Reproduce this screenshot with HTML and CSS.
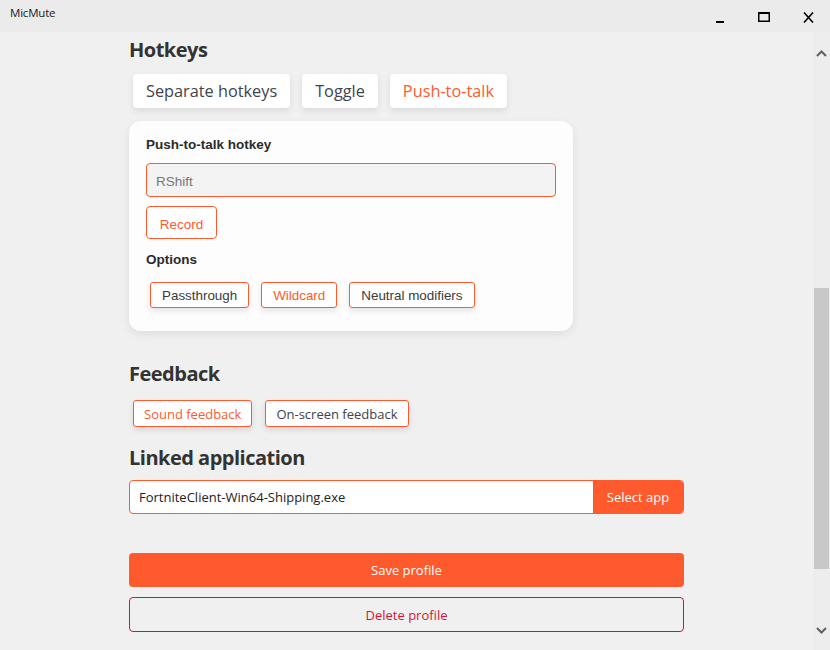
FILE: index.html
```html
<!DOCTYPE html>
<html>
<head>
<meta charset="utf-8">
<title>MicMute</title>
<link rel="stylesheet" href="styles.css">
</head>
<body>
<div class="window">
  <header class="titlebar">
    <span class="title">MicMute</span>
    <div class="controls">
      <span class="ctl"><svg width="8" height="2" viewBox="0 0 8 2"><rect width="8" height="2" fill="#000"/></svg></span>
      <span class="ctl"><svg width="12" height="10" viewBox="0 0 12 10"><rect x="0.75" y="1" width="10.5" height="8.25" fill="none" stroke="#000" stroke-width="1.5"/><rect x="0" y="0" width="12" height="2" fill="#000"/></svg></span>
      <span class="ctl"><svg width="11" height="11" viewBox="0 0 11 11"><path d="M1 0.5 L10 10.5 M10 0.5 L1 10.5" stroke="#000" stroke-width="1.6" fill="none"/></svg></span>
    </div>
  </header>
  <div class="body">
    <main class="content">
      <h2 class="heading">Hotkeys</h2>
      <div class="tabs">
        <button class="tab">Separate hotkeys</button>
        <button class="tab">Toggle</button>
        <button class="tab active">Push-to-talk</button>
      </div>
      <section class="card">
        <h3 class="card-title">Push-to-talk hotkey</h3>
        <div class="hotkey-input">RShift</div>
        <button class="record">Record</button>
        <h3 class="card-title options-title">Options</h3>
        <div class="options">
          <button class="opt">Passthrough</button>
          <button class="opt on">Wildcard</button>
          <button class="opt">Neutral modifiers</button>
        </div>
      </section>
      <h2 class="heading feedback-heading">Feedback</h2>
      <div class="feedback">
        <button class="fb on">Sound feedback</button>
        <button class="fb">On-screen feedback</button>
      </div>
      <h2 class="heading linked-heading">Linked application</h2>
      <div class="app-group">
        <div class="app-input">FortniteClient-Win64-Shipping.exe</div>
        <button class="select-app">Select app</button>
      </div>
      <button class="save">Save profile</button>
      <button class="delete">Delete profile</button>
    </main>
    <aside class="scrollbar">
      <span class="arrow"><svg width="11" height="7" viewBox="0 0 11 7"><path d="M1 6 L5.5 1.5 L10 6" stroke="#606060" stroke-width="2" fill="none"/></svg></span>
      <div class="track"><div class="thumb"></div></div>
      <span class="arrow"><svg width="11" height="7" viewBox="0 0 11 7"><path d="M1 1 L5.5 5.5 L10 1" stroke="#606060" stroke-width="2" fill="none"/></svg></span>
    </aside>
  </div>
</div>
</body>
</html>
```
FILE: styles.css
```css
* { box-sizing: border-box; }
html, body { margin: 0; padding: 0; }
body {
  width: 830px;
  height: 650px;
  overflow: hidden;
  background: #f0f0f0;
  font-family: "Open Sans", "Noto Sans", sans-serif;
  color: #333;
}
button { font: inherit; cursor: pointer; }

.window { display: flex; flex-direction: column; height: 650px; }

.titlebar {
  height: 32px;
  background: #ebebeb;
  display: flex;
  align-items: flex-start;
  justify-content: space-between;
  flex-shrink: 0;
}
.title {
  font-size: 11.5px;
  color: #1a1a1a;
  margin: 5px 0 0 10px;
  letter-spacing: -0.2px;
}
.controls { display: flex; padding-top: 12px; padding-right: 0; }
.ctl { width: 44px; display: flex; justify-content: center; align-items: flex-start; height: 11px; }
.ctl:first-child { align-items: flex-end; }

.body { display: flex; flex: 1; min-height: 0; }

.content {
  flex: 1;
  padding: 3px 0 0 129px;
  display: flex;
  flex-direction: column;
  align-items: flex-start;
}

.heading {
  margin: 0;
  padding-top: 1px;
  font-size: 20px;
  line-height: 28px;
  font-weight: 700;
  color: #333;
  letter-spacing: -0.5px;
}

.tabs { display: flex; gap: 12px; margin: 10px 0 0 4px; }
.tab {
  height: 34px;
  padding: 0 13px;
  border: none;
  border-radius: 4px;
  background: #fff;
  color: #40444c;
  font-size: 16.3px;
  box-shadow: 0 3px 7px rgba(0,0,0,0.09);
}
.tab.active { color: #ff5a2e; }

.card {
  width: 444px;
  margin-top: 13px;
  background: #fdfdfd;
  border-radius: 12px;
  padding: 16px 17px 23px;
  box-shadow: 0 3px 10px rgba(0,0,0,0.08);
  font-family: "Liberation Sans", Arial, sans-serif;
  display: flex;
  flex-direction: column;
  align-items: flex-start;
}
.card-title {
  margin: 0;
  font-size: 13.5px;
  line-height: 16px;
  font-weight: 700;
  color: #2b2b2b;
}
.hotkey-input {
  width: 410px;
  height: 34px;
  margin-top: 10px;
  border: 1px solid #ff5a2e;
  border-radius: 4px;
  background: #f3f3f3;
  color: #777;
  font-size: 13.5px;
  line-height: 32px;
  padding: 2px 0 0 9px;
}
.record {
  margin-top: 9px;
  height: 33px;
  width: 71px;
  padding: 3px 0 0;
  border: 1px solid #ff5a2e;
  border-radius: 4px;
  background: #fff;
  color: #ff5a2e;
  font-size: 13.5px;
}
.options-title { margin-top: 13px; }
.options { display: flex; gap: 12px; margin: 14px 0 0 4px; }
.opt {
  height: 26px;
  padding: 0 11px;
  border: 1px solid #ff5a2e;
  border-radius: 3px;
  background: #fff;
  color: #3a3a3a;
  font-size: 13.4px;
  box-shadow: 0 3px 6px rgba(0,0,0,0.1);
}
.opt.on { color: #ff5a2e; }

.feedback-heading { margin-top: 28px; }
.feedback { display: flex; gap: 13px; margin: 12px 0 0 4px; }
.fb {
  height: 27px;
  padding: 0 10px;
  border: 1px solid #ff5a2e;
  border-radius: 3px;
  background: #fff;
  color: #3d4149;
  font-size: 13px;
  box-shadow: 0 3px 6px rgba(0,0,0,0.1);
}
.fb.on { color: #ff5a2e; }

.linked-heading { margin-top: 16px; }
.app-group {
  width: 555px;
  height: 34px;
  margin-top: 8px;
  display: flex;
  border: 1px solid #ff5a2e;
  border-radius: 4px;
  overflow: hidden;
  background: #fff;
}
.app-input {
  flex: 1;
  padding-left: 9px;
  font-size: 13px;
  line-height: 32px;
  color: #222;
}
.select-app {
  width: 90px;
  border: none;
  padding: 0;
  background: #ff5a2e;
  color: #fff;
  font-size: 13px;
}

.save {
  width: 555px;
  height: 34px;
  margin-top: 39px;
  border: none;
  border-radius: 4px;
  background: #ff5a2e;
  color: #fff;
  font-size: 13px;
}
.delete {
  width: 555px;
  height: 35px;
  margin-top: 10px;
  border: 1px solid #d9122f;
  border-radius: 4px;
  background: transparent;
  color: #d4143a;
  font-size: 13px;
}

.scrollbar {
  width: 17px;
  background: #ededed;
  display: flex;
  flex-direction: column;
  align-items: center;
  padding: 17px 0 16px;
  flex-shrink: 0;
}
.arrow { height: 8px; display: flex; align-items: center; }
.track { flex: 1; width: 100%; display: flex; flex-direction: column; padding: 0 1px; }
.thumb {
  margin-top: 231px;
  height: 281px;
  background: #c8c8c8;
}
```
